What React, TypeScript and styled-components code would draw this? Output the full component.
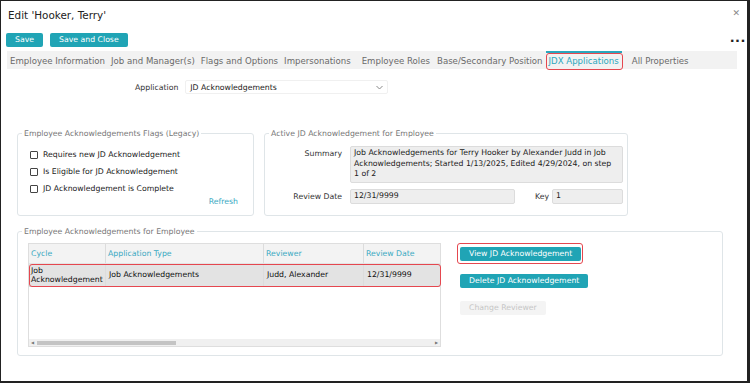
import styled, { createGlobalStyle } from 'styled-components'

const teal = '#20a4b5'
const red = '#e5474f'
const label = '#333'
const font = `"DejaVu Sans", Verdana, sans-serif`

const Global = createGlobalStyle`
	html, body { margin: 0; padding: 0; background: #fff; }
	body { font-family: ${font}; font-size: 7.75px; color: #222; }
	* { box-sizing: border-box; }
`

const Frame = styled.div`
	width: 750px;
	height: 383px;
	border: 1px solid #222;
	border-right-width: 3px;
	border-bottom-width: 2px;
	padding: 0 10px 0 5px;
	display: flex;
	flex-direction: column;
	overflow: hidden;
`
const TitleRow = styled.div`
	display: flex;
	justify-content: space-between;
	align-items: center;
	height: 27px;
	padding-left: 2px;
`
const Title = styled.h1`
	margin: 0;
	font-size: 10.4px;
	font-weight: normal;
	color: #222;
`
const Close = styled.span`
	font-size: 9px;
	color: #888;
	margin-top: -4px;
	margin-right: -3px;
`
const ToolRow = styled.div`
	display: flex;
	align-items: flex-start;
	gap: 7px;
	height: 23px;
	padding-top: 5px;
`
const Button = styled.button<{ $off?: boolean }>`
	font-family: ${font};
	font-size: 7.75px;
	height: 14px;
	padding: 0 9px;
	border: none;
	border-radius: 2px;
	background: ${p => (p.$off ? '#f4f4f4' : teal)};
	color: ${p => (p.$off ? '#c6c6c6' : '#fff')};
	line-height: 14px;
	white-space: nowrap;
`
const More = styled.span`
	margin-left: auto;
	margin-right: -9px;
	font-size: 13px;
	font-weight: bold;
	letter-spacing: 0.5px;
	color: #222;
	line-height: 10px;
	margin-top: 3px;
`
const Tabs = styled.div`
	display: flex;
	align-items: stretch;
	background: #f2f2f2;
	height: 18px;
	margin-left: 1px;
	font-size: 8.6px;
`
const Tab = styled.div<{ $active?: boolean; $gap?: number }>`
	display: flex;
	align-items: center;
	padding: 0 3px;
	margin-left: ${p => p.$gap ?? 0}px;
	color: ${p => (p.$active ? '#2aa7bd' : '#6a6a6a')};
	border-top: 2px solid ${p => (p.$active ? '#2aa7bd' : 'transparent')};
	white-space: nowrap;
	position: relative;
`
const Mark = styled.span`
	position: absolute;
	inset: 0px -1px -1px 0px;
	border: 1.5px solid ${red};
	border-radius: 3px;
	pointer-events: none;
`
const Body = styled.div`
	display: flex;
	flex-direction: column;
	padding: 11px 0 0 11px;
`
const AppRow = styled.div`
	display: flex;
	align-items: center;
	gap: 7px;
	margin-left: 118px;
	height: 14px;
`
const AppLabel = styled.span`
	color: ${label};
`
const Select = styled.div`
	width: 203px;
	height: 14px;
	display: flex;
	align-items: center;
	justify-content: space-between;
	padding: 0 4px 0 4px;
	border: 1px solid #f0f0f0;
	border-radius: 2px;
	color: #222;
`
const FieldRow = styled.div`
	display: flex;
	gap: 10px;
	margin-top: 35px;
`
const Field = styled.fieldset<{ $w: number; $h: number }>`
	width: ${p => p.$w}px;
	height: ${p => p.$h}px;
	margin: 0;
	padding: 8px 4px 0 10px;
	border: 1px solid #dfe5e8;
	border-radius: 3px;
	min-width: 0;
`
const Legend = styled.legend`
	padding: 0 2px;
	margin-left: -6px;
	color: #777;
`
const Check = styled.label`
	display: flex;
	align-items: center;
	gap: 5px;
	height: 17px;
	color: #222;
	padding-left: 2px;
`
const Box = styled.span`
	width: 8px;
	height: 8px;
	border: 1px solid #444;
	border-radius: 1px;
`
const Refresh = styled.div`
	text-align: right;
	color: #3aa9c2;
	margin-top: 0px;
	padding-right: 11px;
`
const Grid2 = styled.div`
	display: grid;
	grid-template-columns: 67px 1fr;
	column-gap: 8px;
	row-gap: 6px;
	align-items: start;
	padding-top: 0px;
`
const FLabel = styled.span<{ $pad?: number }>`
	text-align: right;
	color: ${label};
	padding-top: ${p => p.$pad ?? 3}px;
`
const ReadOnly = styled.div<{ $h?: number; $w?: number; $grow?: boolean }>`
	background: #eeeeee;
	border: 1px solid #dcdcdc;
	border-radius: 2px;
	min-height: ${p => p.$h ?? 13}px;
	width: ${p => (p.$w ? `${p.$w}px` : 'auto')};
	flex: ${p => (p.$grow ? 1 : 'none')};
	padding: 1px 10px 1px 3px;
	line-height: 10.5px;
	color: #222;
`
const Inline = styled.div`
	display: flex;
	align-items: center;
	gap: 3px;
`
const Key = styled.span`
	margin-left: 17px;
	color: ${label};
`
const BottomBody = styled.div`
	display: flex;
	gap: 19px;
	margin-top: -1px;
`
const Table = styled.div`
	width: 413px;
	height: 104px;
	border: 1px solid #dedede;
	display: flex;
	flex-direction: column;
`
const Row = styled.div<{ $head?: boolean; $sel?: boolean }>`
	display: grid;
	grid-template-columns: 76px 158px 100px 1fr;
	height: ${p => (p.$head ? 20 : 23)}px;
	background: ${p => (p.$head ? '#f3f3f3' : p.$sel ? '#e3e3e3' : '#fff')};
	color: ${p => (p.$head ? '#3aa9c2' : '#111')};
	border-bottom: 1px solid ${p => (p.$head ? '#e4e4e4' : '#d9d9d9')};
	position: relative;
`
const Cell = styled.div<{ $first?: boolean; $pad?: number }>`
	display: flex;
	align-items: center;
	padding-left: ${p => p.$pad ?? 2}px;
	border-left: ${p => (p.$first ? 'none' : '1px solid #dcdcdc')};
	line-height: 9.5px;
	white-space: nowrap;
`
const Spacer = styled.div`
	flex: 1;
`
const Scroll = styled.div`
	height: 7px;
	background: #f0f0f0;
	display: flex;
	align-items: center;
	padding: 0 2px;
	gap: 3px;
`
const Thumb = styled.div`
	width: 139px;
	height: 4px;
	background: #c4c4c4;
`
const Arrow = styled.span`
	font-size: 4px;
	color: #777;
`
const Actions = styled.div`
	display: flex;
	flex-direction: column;
	align-items: flex-start;
	gap: 13px;
	padding-top: 4px;
`
const Marked = styled.div`
	position: relative;
	display: flex;
`
const Outline = styled.span`
	position: absolute;
	inset: -4px -2px -3px -3px;
	border: 1.5px solid ${red};
	border-radius: 3px;
`

const tabs = [
	'Employee Information',
	'Job and Manager(s)',
	'Flags and Options',
	'Impersonations',
	'Employee Roles',
	'Base/Secondary Position',
	'JDX Applications',
	'All Properties',
]

const gaps: Record<string, number> = { 'Employee Roles': 5, 'Base/Secondary Position': 1, 'All Properties': 7 }

const Chevron = () => (
	<svg width="7" height="5" viewBox="0 0 7 5">
		<path d="M0.5 1 L3.5 4 L6.5 1" fill="none" stroke="#888" strokeWidth="1" />
	</svg>
)

const App = () => (
	<>
		<Global />
		<Frame>
			<TitleRow>
				<Title>Edit 'Hooker, Terry'</Title>
				<Close>✕</Close>
			</TitleRow>
			<ToolRow>
				<Button>Save</Button>
				<Button>Save and Close</Button>
				<More>···</More>
			</ToolRow>
			<Tabs>
				{tabs.map(t => (
					<Tab key={t} $active={t === 'JDX Applications'} $gap={gaps[t]}>
						{t}
						{t === 'JDX Applications' && <Mark />}
					</Tab>
				))}
			</Tabs>
			<Body>
				<AppRow>
					<AppLabel>Application</AppLabel>
					<Select>
						JD Acknowledgements
						<Chevron />
					</Select>
				</AppRow>
				<FieldRow>
					<Field $w={237} $h={87}>
						<Legend>Employee Acknowledgements Flags (Legacy)</Legend>
						<Check><Box />Requires new JD Acknowledgement</Check>
						<Check><Box />Is Eligible for JD Acknowledgement</Check>
						<Check><Box />JD Acknowledgement is Complete</Check>
						<Refresh>Refresh</Refresh>
					</Field>
					<Field $w={364} $h={87}>
						<Legend>Active JD Acknowledgement for Employee</Legend>
						<Grid2>
							<FLabel>Summary</FLabel>
							<ReadOnly $h={37}>
								Job Acknowledgements for Terry Hooker by Alexander Judd in Job Acknowledgements; Started 1/13/2025, Edited 4/29/2024, on step 1 of 2
							</ReadOnly>
							<FLabel $pad={3}>Review Date</FLabel>
							<Inline>
								<ReadOnly $w={165}>12/31/9999</ReadOnly>
								<Key>Key</Key>
								<ReadOnly $grow>1</ReadOnly>
							</Inline>
						</Grid2>
					</Field>
				</FieldRow>
				<Field $w={706} $h={129} style={{ marginTop: 11 }}>
					<Legend>Employee Acknowledgements for Employee</Legend>
					<BottomBody>
						<Table>
							<Row $head>
								<Cell $first>Cycle</Cell>
								<Cell>Application Type</Cell>
								<Cell>Reviewer</Cell>
								<Cell>Review Date</Cell>
							</Row>
							<Row $sel>
								<Cell $first>Job<br />Acknowledgement</Cell>
								<Cell $pad={3}>Job Acknowledgements</Cell>
								<Cell $pad={3}>Judd, Alexander</Cell>
								<Cell $pad={3}>12/31/9999</Cell>
								<Mark />
							</Row>
							<Spacer />
							<Scroll>
								<Arrow>◀</Arrow>
								<Thumb />
								<Spacer />
								<Arrow>▶</Arrow>
							</Scroll>
						</Table>
						<Actions>
							<Marked>
								<Button>View JD Acknowledgement</Button>
								<Outline />
							</Marked>
							<Button>Delete JD Acknowledgement</Button>
							<Button $off>Change Reviewer</Button>
						</Actions>
					</BottomBody>
				</Field>
			</Body>
		</Frame>
	</>
)

export default App
